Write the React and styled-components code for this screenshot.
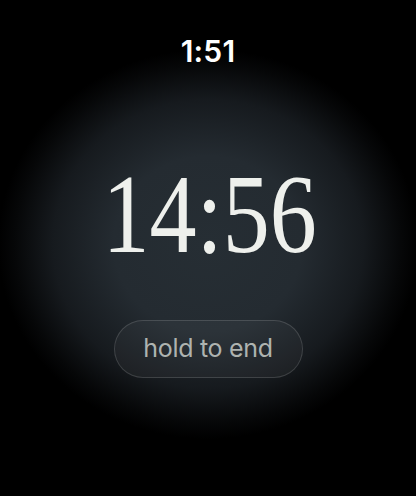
import styled, { createGlobalStyle } from 'styled-components';

const GlobalStyle = createGlobalStyle`
  html, body {
    margin: 0;
    padding: 0;
    background: #000;
  }
  * {
    box-sizing: border-box;
  }
`;

const Screen = () => {
  return (
    <>
      <GlobalStyle />
      <Watch>
        <StatusTime>1:51</StatusTime>
        <Center>
          <BigTime>14:56</BigTime>
          <HoldButton>hold to end</HoldButton>
        </Center>
      </Watch>
    </>
  );
};

const Watch = styled.div`
  width: 416px;
  height: 496px;
  overflow: hidden;
  display: flex;
  flex-direction: column;
  align-items: center;
  background: radial-gradient(
    ellipse 210px 195px at 50% 244px,
    #262e34 0%,
    #242b31 45%,
    #161a1e 74%,
    #060708 92%,
    #000 100%
  );
`;

const StatusTime = styled.div`
  margin-top: 33px;
  font-family: Inter, "Liberation Sans", sans-serif;
  font-size: 30px;
  font-weight: 600;
  line-height: 36px;
  color: #fff;
  letter-spacing: 0.2px;
`;

const Center = styled.div`
  display: flex;
  flex-direction: column;
  align-items: center;
  margin-top: 80px;
`;

const BigTime = styled.div`
  font-family: "Liberation Serif", serif;
  font-size: 112px;
  line-height: 130px;
  color: #eef0ec;
  transform: scaleX(0.84);
  margin-left: 4px;
`;

const HoldButton = styled.button`
  margin-top: 41px;
  width: 189px;
  height: 58px;
  border-radius: 29px;
  border: 1px solid rgba(255, 255, 255, 0.14);
  background: rgba(255, 255, 255, 0.04);
  color: #aeb3b0;
  font-family: Inter, "Liberation Sans", sans-serif;
  font-size: 25px;
  font-weight: 400;
  letter-spacing: -0.3px;
  padding: 0 0 2px 0;
  display: flex;
  align-items: center;
  justify-content: center;
`;

export default Screen;
